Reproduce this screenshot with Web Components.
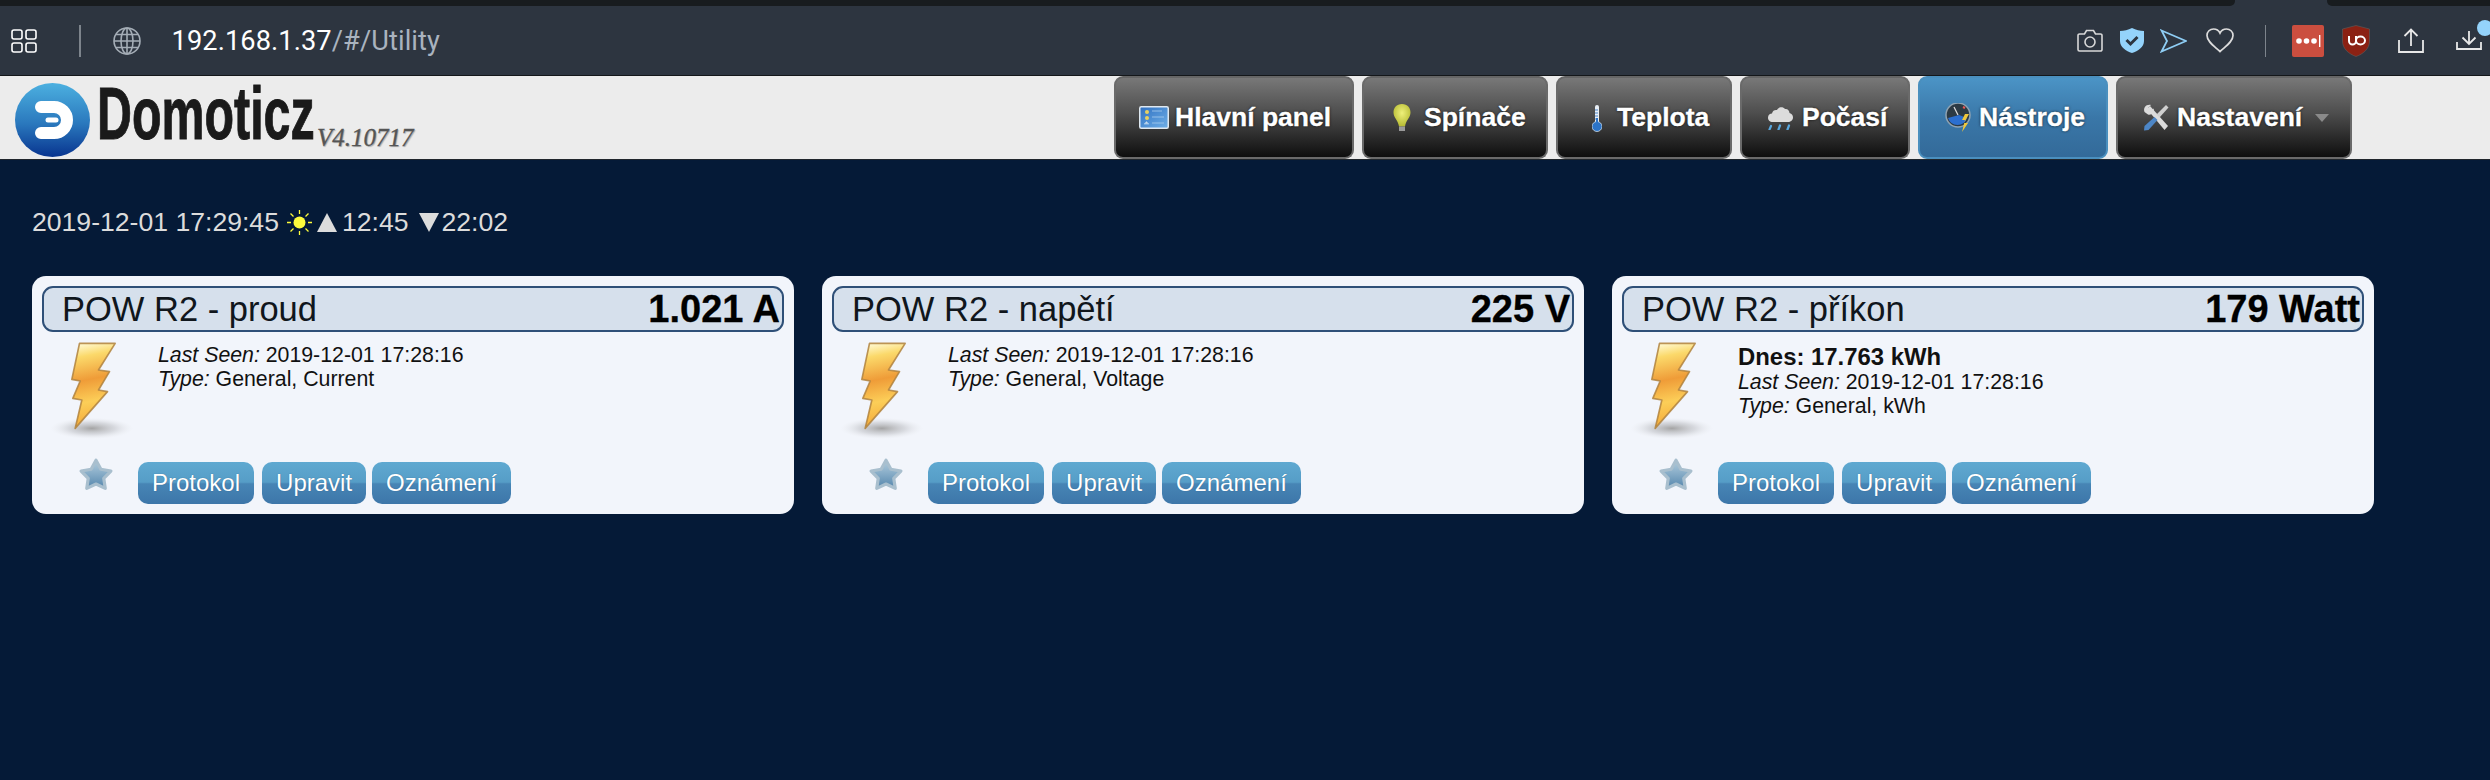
<!DOCTYPE html>
<html lang="cs"><head><meta charset="utf-8"><title>Domoticz</title>
<style>
html,body{margin:0;padding:0;background:#051a37;}
body{width:2490px;height:780px;overflow:hidden;font-family:"Liberation Sans",Arial,sans-serif;}
em{font-style:italic}
</style></head><body>
<browser-bar></browser-bar>
<app-header>
  <nav-btn style="--w:240px;--pl:23px;--g:6px"><svg slot="icon" width="30" height="23" viewBox="0 0 30 23"><defs><linearGradient id="a" x1="0" y1="0" x2="1" y2="1"><stop offset="0" stop-color="#2f6fc0"/><stop offset="1" stop-color="#6fb0e8"/></linearGradient></defs><rect x=".75" y=".75" width="28.5" height="21.5" rx="1.5" fill="url(#a)" stroke="#dfe8f0" stroke-width="1.5"/><circle cx="8" cy="6" r="2" fill="#e8d060"/><circle cx="8" cy="12" r="2" fill="#e8d060"/><path d="M5 18h5l-2.500-2.500zM13 5h10M13 11h12M13 17h12" stroke="#a9cdee" fill="#eee" stroke-width="1" opacity=".8"/></svg>Hlavní panel</nav-btn>
  <nav-btn style="--w:186px;--pl:28px;--g:12px"><svg slot="icon" width="20" height="30" viewBox="0 0 20 30"><defs><radialGradient id="b" cx=".5" cy=".4" r=".6"><stop offset="0" stop-color="#eef07a"/><stop offset="1" stop-color="#b6bb33"/></radialGradient></defs><path d="M10 1C4.500 1 1.500 5 1.500 9.500c0 5 4.500 7.500 5.500 14h6c1-6.500 5.500-9 5.500-14C18.500 5 15.500 1 10 1z" fill="url(#b)"/><rect x="7" y="23.500" width="6" height="4.500" fill="#9a9a9a"/><rect x="8" y="28" width="4" height="2" fill="#333"/></svg>Spínače</nav-btn>
  <nav-btn style="--w:176px;--pl:34px;--g:15px"><svg slot="icon" width="10" height="28" viewBox="0 0 10 28"><rect x="3" y="1" width="4" height="19" rx="2" fill="#e8eef5"/><path d="M3 6h3M3 9h3M3 12h3M3 15h3" stroke="#4a84c8" stroke-width="1"/><circle cx="5" cy="22.500" r="5" fill="#2c74c8" stroke="#cfe0f0" stroke-width=".8"/><rect x="4" y="14" width="2" height="8" fill="#2c74c8"/></svg>Teplota</nav-btn>
  <nav-btn style="--w:170px;--pl:25px;--g:8px"><svg slot="icon" width="27" height="25" viewBox="0 0 27 25"><path d="M6 17c-3.500 0-5-2-5-4.500S3 8.500 5 8.500C5.500 5.500 8 4.500 10 5c1-3 6-4 8-1 2.500-.500 4.500 1.500 4.500 4 2.500.500 3.500 2.500 3.500 4.500S24.500 17 21 17z" fill="#dcdcdc"/><path d="M4 21l-1.500 3.500M13 20.500l-1.500 4M22 20.500l-1.500 4" stroke="#58a8e0" stroke-width="2.200" stroke-linecap="round"/></svg>Počasí</nav-btn>
  <nav-btn active style="--w:190px;--pl:25px;--g:5px"><svg slot="icon" width="29" height="29" viewBox="0 0 29 29"><circle cx="13" cy="12" r="12" fill="#2c3a44" stroke="#8fa3b3" stroke-width="1.500"/><path d="M3 15a10 10 0 0 0 19 0l-8-3z" fill="#2b6fd0"/><path d="M13 12L9 4" stroke="#ddd" stroke-width="1.200"/><path d="M18 4l2 1" stroke="#e55" stroke-width="2"/><path d="M24 11l-5 9h4l-6 9 3-12h-3l3-6z" fill="#f1c83a"/></svg>Nástroje</nav-btn>
  <nav-btn style="--w:236px;--pl:25px;--g:8px"><svg slot="icon" width="26" height="27" viewBox="0 0 26 27"><path d="M4 5l3-3 18 20-3.500 4z" fill="#dcdcdc"/><path d="M1.500 8C0 4 3 0 8 1L5 4l2.500 3L10.500 4.500C12 8 8.500 11.500 5 10.500z" fill="#dcdcdc"/><path d="M23 1l2.500 2.500-9 10-3-3z" fill="#d0d0d0"/><path d="M11.500 13l3 3L5.500 26 1 26.500 1.500 22z" fill="#4d86c6"/></svg>Nastavení<span slot="after" style="display:block;width:0;height:0;border:7.500px solid transparent;border-top:8px solid #8a8a8a;border-bottom:0;margin-left:13px"></span></nav-btn>
</app-header>
<main-view>
  <status-line></status-line>
  <device-card>
    <span slot="title">POW R2 - proud</span><span slot="value">1.021 A</span>
    <div><em>Last Seen:</em> 2019-12-01 17:28:16</div><div><em>Type:</em> General, Current</div>
  </device-card>
  <device-card>
    <span slot="title">POW R2 - napětí</span><span slot="value">225 V</span>
    <div><em>Last Seen:</em> 2019-12-01 17:28:16</div><div><em>Type:</em> General, Voltage</div>
  </device-card>
  <device-card>
    <span slot="title">POW R2 - příkon</span><span slot="value">179 Watt</span>
    <div style="font-weight:bold;font-size:23.900px;line-height:26px;margin-top:1px">Dnes: 17.763 kWh</div><div><em>Last Seen:</em> 2019-12-01 17:28:16</div><div><em>Type:</em> General, kWh</div>
  </device-card>
</main-view>
<script>
function def(name, html){
  customElements.define(name, class extends HTMLElement{
    constructor(){super();this.attachShadow({mode:'open'}).innerHTML=html;}
  });
}
def('browser-bar',`<style>
:host{display:block;height:76px;background:#2d3540;position:relative;overflow:hidden;box-sizing:border-box;border-bottom:1px solid #14171a}
.strip{display:flex;height:6px}
.d1{flex:1;background:#181c1f;border-bottom-right-radius:5px}
.d2{width:92px}
.d3{width:163px;background:#181c1f;border-bottom-left-radius:5px}
.row{display:flex;align-items:center;height:69px;padding:0 8px 0 11px}
.sep{width:1.5px;height:32px;background:#7d848c;flex:none}
svg{display:block;flex:none}
.url{font:27.200px/1 Roboto,"Liberation Sans",sans-serif;color:#a9b3bf;margin:3px 0 0 31px;letter-spacing:.1px}
.url b{font-weight:400;color:#fff}
.right{margin-left:auto;display:flex;align-items:center}
.dot{position:absolute;left:2477px;top:20px;width:16px;height:16px;border-radius:50%;background:#94d3fb}
</style>
<div class="strip"><div class="d1"></div><div class="d2"></div><div class="d3"></div></div>
<div class="row">
<svg width="26" height="24" viewBox="0 0 26 24" fill="none" stroke="#fff" stroke-width="1.600"><rect x="1" y="1" width="10" height="9" rx="2"/><rect x="15" y="1" width="10" height="9" rx="2"/><rect x="1" y="14" width="10" height="9" rx="2"/><rect x="15" y="14" width="10" height="9" rx="2"/></svg>
<div class="sep" style="margin-left:42px"></div>
<svg style="margin-left:32px" width="28" height="28" viewBox="0 0 28 28" fill="none" stroke="#a4adb6" stroke-width="1.600"><circle cx="14" cy="14" r="13"/><ellipse cx="14" cy="14" rx="6" ry="13"/><path d="M14 1v26M1 14h26M3 7.500h22M3 20.500h22"/></svg>
<div class="url"><b>192.168.1.37</b>/#/Utility</div>
<div class="right">
<svg width="26" height="23" viewBox="0 0 26 23" fill="none" stroke="#d8d8d8" stroke-width="1.600"><path d="M2.500 5h5l2-3.500h7l2 3.500h5a1.500 1.500 0 0 1 1.500 1.500v14a1.500 1.500 0 0 1-1.500 1.500h-21A1.500 1.500 0 0 1 1 20.500v-14A1.500 1.500 0 0 1 2.500 5z"/><circle cx="13" cy="13" r="5"/></svg>
<svg style="margin-left:17px" width="24" height="25" viewBox="0 0 24 25"><path d="M12 0c4 2 8 3 12 3v10c0 6-6 10-12 12C6 23 0 19 0 13V3c4 0 8-1 12-3z" fill="#94d3fb"/><path d="M6.500 12l4 4 7-7" fill="none" stroke="#2d3540" stroke-width="3"/></svg>
<svg style="margin-left:16px" width="27" height="24" viewBox="0 0 27 24" fill="none" stroke="#8ecdf4" stroke-width="1.800"><path d="M1.500 1.500L26 12 1.500 22.500 7 12z"/></svg>
<svg style="margin-left:19px" width="28" height="25" viewBox="0 0 28 25" fill="none" stroke="#dcdcdc" stroke-width="1.700"><path d="M14 23.500C8 18 1 13.500 1 7.500 1 3.500 4 1 7.500 1 10.500 1 13 3 14 5c1-2 3.500-4 6.500-4C24 1 27 3.500 27 7.500c0 6-7 10.500-13 16z"/></svg>
<div class="sep" style="margin-left:31px"></div>
<svg style="margin-left:26px" width="32" height="32" viewBox="0 0 32 32"><rect width="32" height="32" rx="2" fill="#cb4e3f"/><circle cx="7" cy="16" r="2.800" fill="#fff"/><circle cx="14.500" cy="16" r="2.800" fill="#fff"/><circle cx="22" cy="16" r="2.800" fill="#fff"/><rect x="27" y="10" width="1.400" height="12" fill="#fff"/></svg>
<svg style="margin-left:18px" width="28" height="32" viewBox="0 0 28 32"><path d="M14 .5l13.500 3.500v12c0 8-6.500 13-13.500 15.500C7 29 .5 24 .5 16V4z" fill="#8b2113" stroke="#5e5e5e" stroke-width=".6"/><path d="M7 11v5a3.500 3.500 0 0 0 7 0v-5M14 15.500a4.500 4 0 1 0 9 0 4.500 4 0 1 0-9 0" fill="none" stroke="#fff" stroke-width="2"/></svg>
<svg style="margin-left:28px" width="26" height="26" viewBox="0 0 26 26" fill="none" stroke="#e8e8e8" stroke-width="1.800"><path d="M1 12v12h24V12M13 18V1.500M6.500 8L13 1.500 19.500 8"/></svg>
<svg style="margin-left:32px" width="26" height="19" viewBox="0 0 26 19" fill="none" stroke="#e8e8e8" stroke-width="1.800"><path d="M1 11v7h24v-7M13 13V0M6.500 6.500L13 13l6.500-6.500"/></svg>
</div></div><div class="dot"></div>`);
def('app-header',`<style>
:host{display:flex;height:84px;box-sizing:border-box;background:#ececec;border-bottom:1px solid #20262c;padding-right:138px}
.logo{display:flex;flex:none}
svg{display:block;margin:7px 0 0 15px}
.name{display:block;width:218px;margin-left:7px;font:bold 75px/84px "Liberation Sans",sans-serif;color:#1a1a1a;-webkit-text-stroke:1px #1a1a1a;transform:scaleX(.645);transform-origin:0 0;white-space:nowrap;height:84px;margin-top:-5px}
.ver{font:italic 25px/1 "Liberation Serif",serif;font-feature-settings:"onum";color:#555;margin:49px 0 0 2px;text-shadow:1px 1px 1px #aaa;white-space:nowrap;-webkit-text-stroke:.3px #555}
.nav{margin-left:auto;display:flex;gap:8px}
</style>
<div class="logo">
<svg width="75" height="74" viewBox="0 0 75 74"><defs><linearGradient id="g" x1="0" y1="0" x2="0" y2="1"><stop offset="0" stop-color="#4cb0e0"/><stop offset=".55" stop-color="#2a78bd"/><stop offset="1" stop-color="#08348f"/></linearGradient></defs><ellipse cx="37.500" cy="37" rx="37.500" ry="37" fill="url(#g)"/><path d="M26 24H39A13 13 0 0 1 39 50H26" fill="none" stroke="#fff" stroke-width="12" stroke-linecap="round"/><path d="M33 37H41" stroke="#fff" stroke-width="5" stroke-linecap="round"/></svg>
<span class="name">Domoticz</span><span class="ver">V4.10717</span>
</div>
<div class="nav"><slot></slot></div>`);
def('nav-btn',`<style>
:host{display:flex;align-items:center;box-sizing:border-box;width:var(--w);height:83px;padding-left:var(--pl);border:2px solid #6a6a6a;border-top-color:#666;border-radius:9px;background:linear-gradient(#787878,#4d4d4d 45%,#0e0e0e);color:#fff;font:bold 26.500px "Liberation Sans",sans-serif;-webkit-text-stroke:.3px #fff;text-shadow:0 0 3px rgba(0,0,0,.8);white-space:nowrap}
:host([active]){background:linear-gradient(#4b94c6,#3a77a8 50%,#336a99);border-color:#4a8fbe}
.i{display:flex;margin-right:var(--g)}
</style><span class="i"><slot name="icon"></slot></span><slot></slot><slot name="after"></slot>`);
def('main-view',`<style>
:host{display:flex;flex-wrap:wrap;gap:38px 28px;padding:46px 0 0 32px}
</style><slot></slot>`);
def('status-line',`<style>
:host{display:flex;align-items:center;flex:0 0 100%;height:32px;color:#dcdcdc;font:26.600px/32px "Liberation Sans",sans-serif;white-space:nowrap}
svg{display:block}
</style>2019-12-01 17:29:45
<svg style="margin:0 5px 0 8px" width="25" height="25" viewBox="0 0 25 25"><circle cx="12.500" cy="12.500" r="6" fill="#fdfb3c"/><path d="M12.500 0v4M12.500 21v4M0 12.500h4M21 12.500h4M3.500 3.500l3 3M18.500 18.500l3 3M21.500 3.500l-3 3M6.500 18.500l-3 3" stroke="#fdfb3c" stroke-width="1.300"/></svg>
<svg width="20" height="19" viewBox="0 0 20 19" style="margin-right:5px"><path d="M10 0l10 19H0z" fill="#dcdcdc"/></svg>12:45<svg width="20" height="19" viewBox="0 0 20 19" style="margin:0 3px 0 10px"><path d="M0 0h20L10 19z" fill="#dcdcdc"/></svg>22:02`);
def('card-btn',`<style>
:host{display:block;height:42px;box-sizing:border-box;padding:0 14px;border-radius:10px;background:linear-gradient(#5fa9d1,#569dc7 48%,#4785b5 52%,#3d76a9);color:#fff;font:24px/42px "Liberation Sans",sans-serif;white-space:nowrap;text-shadow:0 0 1px rgba(20,60,100,.6)}
</style><slot></slot>`);
def('device-card',`<style>
:host{display:block;box-sizing:border-box;width:762px;height:238px;padding:10px;background:#f2f5fb;border-radius:14px;color:#111;font:21.300px/24px "Liberation Sans",sans-serif}
.bar{display:flex;justify-content:space-between;align-items:center;height:46px;box-sizing:border-box;border:2px solid #2f5078;border-radius:11px;background:#d6e0ec;padding:0 2px 0 18px;white-space:nowrap}
.title{font-size:34.500px;color:#10161c}
.value{font-size:38px;font-weight:bold;color:#000;-webkit-text-stroke:.3px #000}
.mid{display:flex;height:100px;margin-top:8px}
.mid svg{display:block;margin-left:8px;flex:none}
.info{margin:3px 0 0 21px;white-space:nowrap}
.foot{display:flex;margin-top:22px}
.star{display:block;margin:-5px 25px 0 37px;flex:none}
.foot card-btn+card-btn{margin-left:8px}
.foot card-btn:last-child{margin-left:6px}
</style>
<div class="bar"><span class="title"><slot name="title"></slot></span><span class="value"><slot name="value"></slot></span></div>
<div class="mid">
<svg width="87" height="100" viewBox="90 60 260 300"><defs>
<radialGradient id="s"><stop offset="0" stop-color="#a4a4a4"/><stop offset=".55" stop-color="#cbcdd2" stop-opacity=".7"/><stop offset="1" stop-color="#e8eaee" stop-opacity="0"/></radialGradient>
<linearGradient id="l" x1=".4" y1="0" x2=".5" y2="1"><stop offset="0" stop-color="#fff6c8"/><stop offset=".14" stop-color="#fbd96a"/><stop offset=".42" stop-color="#ef9c38"/><stop offset=".68" stop-color="#fcce58"/><stop offset="1" stop-color="#f3a535"/></linearGradient></defs>
<ellipse cx="215" cy="325" rx="125" ry="32" fill="url(#s)"/>
<path d="M178 70L285 70L235 150L268 155L235 210L262 215L165 325L185 240L158 235L180 183L155 178z" fill="url(#l)" stroke="#b0823e" stroke-width="5" stroke-linejoin="round" stroke-opacity=".85"/></svg>
<div class="info"><slot></slot></div></div>
<div class="foot">
<svg class="star" width="34" height="34" viewBox="0 0 32 32"><defs><linearGradient id="st" x1="0" y1="0" x2="0" y2="1"><stop offset="0" stop-color="#b3cddd"/><stop offset=".5" stop-color="#84aac6"/><stop offset="1" stop-color="#5586ac"/></linearGradient></defs><path d="M16 3l4.600 8.500 9.400 1.700-6.700 6.900 1.400 9.400-8.700-4.100-8.700 4.100 1.400-9.400L2 13.200l9.400-1.700z" fill="url(#st)" stroke="#a9bfce" stroke-width="3" stroke-linejoin="round"/></svg>
<card-btn>Protokol</card-btn><card-btn>Upravit</card-btn><card-btn>Oznámení</card-btn>
</div>`);
</script>
</body></html>
